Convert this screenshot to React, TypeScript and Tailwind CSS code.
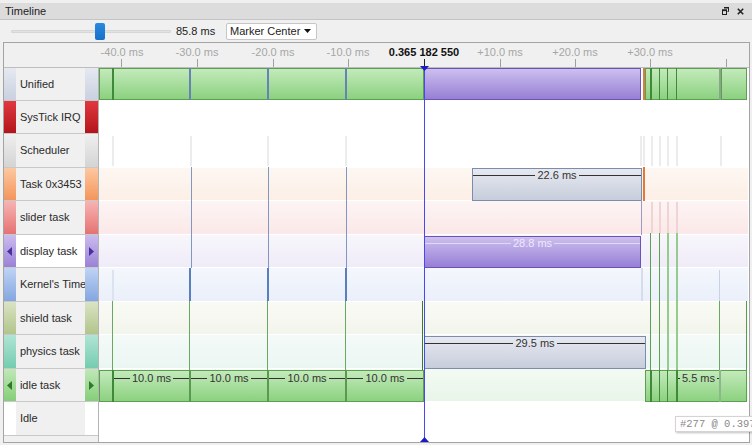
import React from "react";

const TX = 100;
const TY = 68;

type Row = {
  name: string;
  h: string;
  strip: string;
  label: string;
  track: string;
  arrows?: "purple" | "green";
};

const rows: Row[] = [
  { name: "Unified", h: "h-[33px]", strip: "bg-linear-to-b from-[#e6e9f1] to-[#c9d0e0]", label: "bg-[#f0f0f0]", track: "bg-white" },
  { name: "SysTick IRQ", h: "h-[33px]", strip: "bg-linear-to-b from-[#e0383f] to-[#b3141b]", label: "bg-[#f0f0f0]", track: "bg-white" },
  { name: "Scheduler", h: "h-[34px]", strip: "bg-linear-to-b from-[#efefef] to-[#d4d4d4]", label: "bg-[#f0f0f0]", track: "bg-white" },
  { name: "Task 0x3453", h: "h-[33px]", strip: "bg-linear-to-b from-[#fcc8a0] to-[#f3955a]", label: "bg-[#f0f0f0]", track: "bg-linear-to-b from-[#fdf7f2] to-[#fcefe6]" },
  { name: "slider task", h: "h-[34px]", strip: "bg-linear-to-b from-[#f6b4b4] to-[#e47272]", label: "bg-[#f0f0f0]", track: "bg-linear-to-b from-[#fdf4f4] to-[#fbe8e8]" },
  { name: "display task", h: "h-[33px]", strip: "bg-linear-to-b from-[#cbbcee] to-[#9a82d6]", label: "bg-white", track: "bg-linear-to-b from-[#f8f6fc] to-[#efebf8]", arrows: "purple" },
  { name: "Kernel's Timer", h: "h-[34px]", strip: "bg-linear-to-b from-[#c0d3f3] to-[#84a6e0]", label: "bg-[#f0f0f0]", track: "bg-linear-to-b from-[#f4f7fc] to-[#eaeffa]" },
  { name: "shield task", h: "h-[33px]", strip: "bg-linear-to-b from-[#dae3c4] to-[#b2c48a]", label: "bg-[#f0f0f0]", track: "bg-linear-to-b from-[#f9faf5] to-[#f2f5ec]" },
  { name: "physics task", h: "h-[34px]", strip: "bg-linear-to-b from-[#b0e4d4] to-[#74ccb0]", label: "bg-[#f0f0f0]", track: "bg-linear-to-b from-[#f4faf8] to-[#ebf6f2]" },
  { name: "idle task", h: "h-[33px]", strip: "bg-linear-to-b from-[#c0e8b8] to-[#84ce78]", label: "bg-[#f0f0f0]", track: "bg-linear-to-b from-[#f3faf3] to-[#e9f5e9]", arrows: "green" },
  { name: "Idle", h: "h-[34px]", strip: "bg-white", label: "bg-[#f0f0f0]", track: "bg-white" },
];

const GREEN = "bg-linear-to-b from-[#c3eabb] to-[#8bd17f] border border-[#5c9e52]";
const PURPLE = "bg-linear-to-b from-[#cdbfee] to-[#977fd5] border border-[#6a52b6]";
const GRAY = "bg-linear-to-b from-[#e7e9f0] to-[#c7cddc] border border-[#7d8cab]";

type B = [number, number, number, number, string];

const boxes: B[] = [
  // Unified
  [100, 68, 325, 32, GREEN],
  [113, 68, 2, 32, "bg-[#3f8a38]"],
  [190, 68, 2, 32, "bg-[#6384b4]"],
  [268, 68, 2, 32, "bg-[#6384b4]"],
  [346, 68, 2, 32, "bg-[#6384b4]"],
  [425, 68, 217, 32, PURPLE],
  [644, 68, 2, 32, "bg-[#e07a3a]"],
  [646, 68, 75, 32, GREEN],
  [651, 68, 2, 32, "bg-[#3f8a38]"],
  [660, 68, 1, 32, "bg-[#3f8a38]"],
  [668, 68, 1, 32, "bg-[#3f8a38]"],
  [677, 68, 1, 32, "bg-[#3f8a38]"],
  [720, 68, 2, 32, "bg-[#8aa58a]"],
  [722, 68, 26, 32, GREEN],
  // Scheduler faint lines
  ...[113, 191, 268, 346, 641, 644, 652, 660, 668, 677, 721].map(
    (x) => [x, 136, 2, 30, "bg-[#ececec]"] as B
  ),
  // Task -> display blue lines
  [192, 167, 1, 101, "bg-[#8098c0]"],
  [269, 167, 1, 101, "bg-[#8098c0]"],
  [347, 167, 1, 101, "bg-[#8098c0]"],
  [473, 168, 170, 33, GRAY],
  [644, 167, 2, 34, "bg-[#e07a3a]"],
  // slider
  [642, 200, 1, 35, "bg-[#a098c0]"],
  ...[652, 660, 668, 677].map((x) => [x, 202, 2, 31, "bg-[#f0d4d4]"] as B),
  // display
  [425, 236, 217, 32, PURPLE],
  [651, 233, 1, 168, "bg-[#5e9f56]"],
  [660, 233, 1, 168, "bg-[#5e9f56]"],
  [668, 233, 2, 168, "bg-[#94cc8c]"],
  [677, 233, 2, 168, "bg-[#94cc8c]"],
  // kernel
  [190, 268, 2, 33, "bg-[#5a7fbf]"],
  [268, 268, 2, 33, "bg-[#5a7fbf]"],
  [346, 268, 2, 33, "bg-[#5a7fbf]"],
  [113, 270, 2, 31, "bg-[#dde3ee]"],
  [642, 268, 2, 33, "bg-[#d5dcea]"],
  [720, 270, 1, 31, "bg-[#c8d2e4]"],
  // shield / physics lines
  ...[113, 190, 268, 346].map((x) => [x, 301, 1, 69, "bg-[#6aa862]"] as B),
  [423, 301, 1, 101, "bg-[#3c7a34]"],
  [720, 301, 1, 100, "bg-[#6aa862]"],
  [747, 301, 1, 100, "bg-[#5a9a50]"],
  // physics
  [425, 336, 222, 33, GRAY],
  // idle
  [100, 370, 325, 32, GREEN],
  [113, 370, 2, 32, "bg-[#3f8a38]"],
  [190, 370, 2, 32, "bg-[#5a9a50]"],
  [268, 370, 2, 32, "bg-[#5a9a50]"],
  [346, 370, 2, 32, "bg-[#5a9a50]"],
  [646, 370, 102, 32, GREEN],
  [651, 370, 2, 32, "bg-[#3f8a38]"],
  [660, 370, 1, 32, "bg-[#3f8a38]"],
  [668, 370, 1, 32, "bg-[#3f8a38]"],
  [677, 370, 2, 32, "bg-[#3f8a38]"],
  [720, 370, 2, 32, "bg-[#8fb58a]"],
];

type L = [number, number, number, string, string, string];
const labels: L[] = [
  [474, 642, 175, "22.6 ms", "bg-[#333]", "text-[#333]"],
  [426, 641, 243, "28.8 ms", "bg-[#e2d9f5]", "text-[#eee8fb]"],
  [426, 646, 343, "29.5 ms", "bg-[#333]", "text-[#333]"],
  [115, 190, 378, "10.0 ms", "bg-[#333]", "text-[#333]"],
  [192, 268, 378, "10.0 ms", "bg-[#333]", "text-[#333]"],
  [270, 346, 378, "10.0 ms", "bg-[#333]", "text-[#333]"],
  [348, 424, 378, "10.0 ms", "bg-[#333]", "text-[#333]"],
  [679, 720, 378, "5.5 ms", "bg-[#333]", "text-[#333]"],
];

const ticks = [121, 197, 273, 348, 500, 575, 650, 726];
const rulerLabels: [number, string][] = [
  [122, "-40.0 ms"],
  [197, "-30.0 ms"],
  [273, "-20.0 ms"],
  [348, "-10.0 ms"],
  [500, "+10.0 ms"],
  [575, "+20.0 ms"],
  [650, "+30.0 ms"],
];

function Arrow({ dir, color }: { dir: "l" | "r"; color: string }) {
  return (
    <svg width="5" height="9" viewBox="0 0 5 9">
      {dir === "l" ? (
        <path d="M5 0 L0 4.5 L5 9 Z" fill={color} />
      ) : (
        <path d="M0 0 L5 4.5 L0 9 Z" fill={color} />
      )}
    </svg>
  );
}

export default function App() {
  return (
    <div className="relative w-[752px] h-[445px] overflow-hidden bg-[#f0f0f0] font-['Liberation_Sans',Arial,sans-serif] text-[11px] text-[#222]">
      {/* title bar */}
      <div className="mt-[3px] h-[17px] bg-[#dcdcdc] border-b border-[#c4c4c4] flex items-center pl-[5px] pr-[8px]">
        <span className="text-[11px] leading-[13px] text-[#222]">Timeline</span>
        <div className="ml-auto flex items-center gap-[8px]">
          <svg width="7" height="8" viewBox="0 0 7 8">
            <path d="M2.5 0.5 H6.5 V4.5 H5.5" fill="none" stroke="#222" strokeWidth="1" />
            <rect x="2" y="0" width="5" height="1.5" fill="#222" />
            <rect x="0.5" y="3" width="4" height="4.5" fill="none" stroke="#222" strokeWidth="1" />
            <rect x="0" y="2.5" width="5" height="1.6" fill="#222" />
          </svg>
          <svg width="7" height="7" viewBox="0 0 7 7">
            <path d="M0.8 0.8 L6.2 6.2 M6.2 0.8 L0.8 6.2" stroke="#222" strokeWidth="1.6" />
          </svg>
        </div>
      </div>
      {/* toolbar */}
      <div className="h-[22px] flex items-center pl-[11px]">
        <div className="relative w-[160px] h-[17px] flex items-center">
          <div className="w-full h-[3px] bg-[#e2e2e2] border border-[#d6d6d6] rounded-[1px]" />
          <div className="absolute left-[84px] top-0 w-[10px] h-[17px] rounded-[2px] bg-linear-to-b from-[#2b8ae0] to-[#1670c8]" />
        </div>
        <span className="ml-[5px] w-[50px] text-[11px] text-[#222]">85.8 ms</span>
        <div className="w-[91px] h-[17px] bg-white border border-[#c6c6c6] rounded-[2px] flex items-center pl-[3px] pr-[5px]">
          <span className="text-[11px] leading-[13px] text-[#222]">Marker Center</span>
          <svg className="ml-auto" width="7" height="4" viewBox="0 0 7 4">
            <path d="M0 0 H7 L3.5 4 Z" fill="#111" />
          </svg>
        </div>
      </div>
      {/* frame */}
      <div className="relative ml-[3px] w-[747px] h-[401px] border border-[#a4a4a4] bg-white">
        {/* ruler */}
        <div className="relative h-[25px] bg-[#f0f0f0] border-b border-[#bdbdbd]">
          {ticks.map((x) => (
            <div key={x} className="absolute top-[16px] h-[8px] w-px bg-[#a0a0a0]" style={{ left: x - 4 }} />
          ))}
          <div className="absolute top-[16px] h-[8px] w-px bg-[#222]" style={{ left: 420 }} />
          {rulerLabels.map(([x, t]) => (
            <span
              key={t}
              className="absolute top-[3px] -translate-x-1/2 whitespace-nowrap text-[11px] leading-[13px] text-[#a6a6a6]"
              style={{ left: x - 4 }}
            >
              {t}
            </span>
          ))}
          <span
            className="absolute top-[3px] -translate-x-1/2 whitespace-nowrap text-[11px] leading-[13px] font-bold text-[#111]"
            style={{ left: 420 }}
          >
            0.365 182 550
          </span>
        </div>
        {/* rows */}
        <div className="flex">
          <div className="w-[95px] border-r border-[#b4b4b4] flex flex-col">
            {rows.map((r) => (
              <div key={r.name} className={`${r.h} flex border-b border-[#c8c8c8]`}>
                <div className={`w-[12px] flex items-center justify-center ${r.strip}`}>
                  {r.arrows === "purple" && <Arrow dir="l" color="#4b2f9c" />}
                  {r.arrows === "green" && <Arrow dir="l" color="#2f7a28" />}
                </div>
                <div className={`w-[70px] flex items-center pl-[4px] overflow-hidden whitespace-nowrap ${r.label}`}>
                  <span className="text-[11px] text-[#2a2a2a]">{r.name}</span>
                </div>
                <div className={`w-[13px] flex items-center justify-center ${r.strip}`}>
                  {r.arrows === "purple" && <Arrow dir="r" color="#4b2f9c" />}
                  {r.arrows === "green" && <Arrow dir="r" color="#2f7a28" />}
                </div>
              </div>
            ))}
            <div className="h-[6px] bg-[#f0f0f0]" />
          </div>
          <div className="relative w-[649px] flex flex-col">
            {rows.map((r) => (
              <div key={r.name} className={`${r.h} border-b border-white ${r.track}`} />
            ))}
            <div className="h-[6px] bg-white" />
            <div className="absolute inset-0">
              {boxes.map(([x, y, w, h, c], i) => (
                <div
                  key={i}
                  className={`absolute box-border ${c}`}
                  style={{ left: x - TX, top: y - TY, width: w, height: h }}
                />
              ))}
              {labels.map(([x1, x2, y, t, line, tc], i) => (
                <div
                  key={i}
                  className="absolute flex items-center"
                  style={{ left: x1 - TX, top: y - TY - 6, width: x2 - x1, height: 12 }}
                >
                  <div className={`flex-1 h-px ${line}`} />
                  <span className={`px-[2px] text-[11px] leading-[12px] whitespace-nowrap ${tc}`}>{t}</span>
                  <div className={`flex-1 h-px ${line}`} />
                </div>
              ))}
            </div>
          </div>
        </div>
        {/* marker */}
        <div className="absolute top-[24px] left-[420px] w-px h-[375px] bg-[#4848f0]" />
        <svg className="absolute top-[23px] left-[416px]" width="9" height="5" viewBox="0 0 9 5">
          <path d="M0 0 H9 L4.5 5 Z" fill="#1a1ac8" />
        </svg>
        <svg className="absolute top-[394px] left-[416px]" width="9" height="5" viewBox="0 0 9 5">
          <path d="M0 5 H9 L4.5 0 Z" fill="#1a1ac8" />
        </svg>
      </div>
      {/* tooltip */}
      <div className="absolute left-[675px] top-[416px] w-[95px] h-[16px] bg-white border border-[#d4d4d4] shadow-[1px_1px_2px_rgba(0,0,0,0.25)] flex items-center pl-[4px]">
        <span className="font-['Liberation_Mono',monospace] text-[10.5px] leading-[12px] text-[#8a8a8a] whitespace-nowrap">#277 @ 0.397</span>
      </div>
    </div>
  );
}
